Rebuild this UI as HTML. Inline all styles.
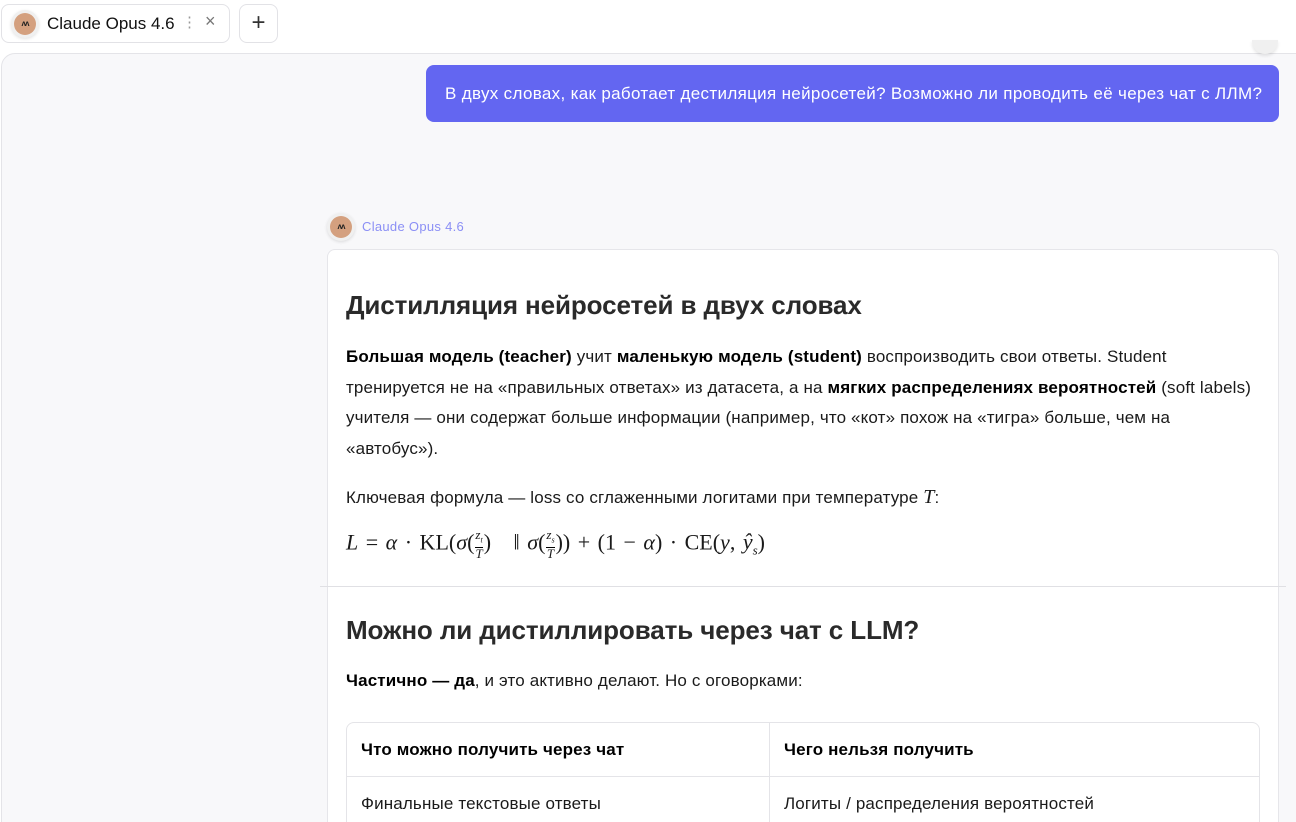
<!DOCTYPE html>
<html><head><meta charset="utf-8"><style>
*{box-sizing:border-box;margin:0;padding:0}
html,body{width:1296px;height:822px;overflow:hidden}
body{background:#fff;font-family:"Liberation Sans",sans-serif;color:#1a1a1a;position:relative}
.tab{position:absolute;left:1px;top:4px;width:229px;height:39px;border:1px solid #e2e2e6;border-radius:8px;background:#fff}
.av{position:absolute;width:22px;height:22px;border-radius:50%;background:#d4a07f;box-shadow:0 0 0 3px #f0f0f0,0 1px 3px 3px rgba(0,0,0,.12);font-size:8px;font-weight:bold;color:#222;text-align:center;line-height:22px;letter-spacing:-1px}
.plus{position:absolute;left:239px;top:4px;width:39px;height:39px;border:1px solid #e2e2e6;border-radius:8px;font-size:24px;text-align:center;line-height:36px;color:#333}
.main{position:absolute;left:1px;top:53px;width:1310px;height:800px;background:#f8f8fa;border:1px solid #e4e4e8;border-radius:14px 0 0 0}
.user{position:absolute;left:426px;top:65px;width:853px;height:57px;background:#6366f1;border-radius:8px;color:#fff;font-size:17px;line-height:57px;padding-left:19px;letter-spacing:.33px;white-space:nowrap}
.card{position:absolute;left:327px;top:249px;width:952px;height:600px;background:#fff;border:1px solid #e6e6ea;border-radius:8px}
h2{position:absolute;left:346px;font-size:26px;font-weight:bold;color:#2a2a2a;letter-spacing:-.1px}
p{position:absolute;left:346px;font-size:17px;line-height:30.5px;color:#1a1a1a;width:930px;letter-spacing:.15px;white-space:nowrap}
b{font-weight:bold;color:#000}
.math{font-family:"Liberation Serif",serif;font-size:22px;word-spacing:2px}
.fr{font-size:13px;display:inline-block;vertical-align:middle;text-align:center;line-height:12px;margin:0 1px}
table{position:absolute;left:346px;top:722px;width:914px;border-collapse:separate;border-spacing:0;border:1px solid #e4e4e8;border-radius:8px;font-size:17px;letter-spacing:.15px}
td{height:54px;padding-left:14px;border-right:1px solid #e4e4e8;border-bottom:1px solid #e4e4e8}
td:last-child{border-right:none}
</style></head><body>
<div class="tab"><div class="av" style="left:12px;top:8px">ᴧᴧ</div><span style="position:absolute;left:45px;top:9px;font-size:17px;color:#111">Claude Opus 4.6</span><span style="position:absolute;left:180px;top:8px;color:#999;font-size:15px">⋮</span><span style="position:absolute;left:203px;top:6px;color:#777;font-size:18px">×</span></div>
<div class="plus">+</div>
<div class="main"></div>
<div style="position:absolute;left:1252px;top:40px;width:26px;height:14px;border-radius:0 0 13px 13px;background:#f0f0f0;box-shadow:0 2px 3px rgba(0,0,0,.1)"></div>
<div class="user">В двух словах, как работает дестиляция нейросетей? Возможно ли проводить её через чат с ЛЛМ?</div>
<div class="av" style="left:330px;top:216px">ᴧᴧ</div>
<div style="position:absolute;left:362px;top:219px;font-size:13px;color:#8b8ff5;letter-spacing:.3px">Claude Opus 4.6</div>
<div class="card"></div>
<h2 style="top:290px">Дистилляция нейросетей в двух словах</h2>
<p style="top:342px"><b>Большая модель (teacher)</b> учит <b>маленькую модель (student)</b> воспроизводить свои ответы. Student<br>тренируется не на «правильных ответах» из датасета, а на <b>мягких распределениях вероятностей</b> (soft labels)<br>учителя — они содержат больше информации (например, что «кот» похож на «тигра» больше, чем на<br>«автобус»).</p>
<p style="top:482px">Ключевая формула — loss со сглаженными логитами при температуре <i class="math" style="font-size:20px">T</i>:</p>
<div class="math" style="position:absolute;left:346px;top:529px;white-space:nowrap"><i>L</i> = <i>α</i> · KL(<i>σ</i>(<span class="fr"><i>z<sub style="font-size:8px">t</sub></i><br><span style="border-top:1px solid #000;display:block"><i>T</i></span></span>) &nbsp;&nbsp;‖ <i>σ</i>(<span class="fr"><i>z<sub style="font-size:8px">s</sub></i><br><span style="border-top:1px solid #000;display:block"><i>T</i></span></span>)) + (1 − <i>α</i>) · CE(<i>y</i>, <i>ŷ<sub style="font-size:13px">s</sub></i>)</div>
<div style="position:absolute;left:320px;top:586px;width:966px;height:1px;background:#e0e0e4"></div>
<h2 style="top:615px">Можно ли дистиллировать через чат с LLM?</h2>
<p style="top:666px"><b>Частично — да</b>, и это активно делают. Но с оговорками:</p>
<table><tr><td style="width:423px"><b>Что можно получить через чат</b></td><td><b>Чего нельзя получить</b></td></tr>
<tr><td>Финальные текстовые ответы</td><td>Логиты / распределения вероятностей</td></tr></table>
</body></html>
